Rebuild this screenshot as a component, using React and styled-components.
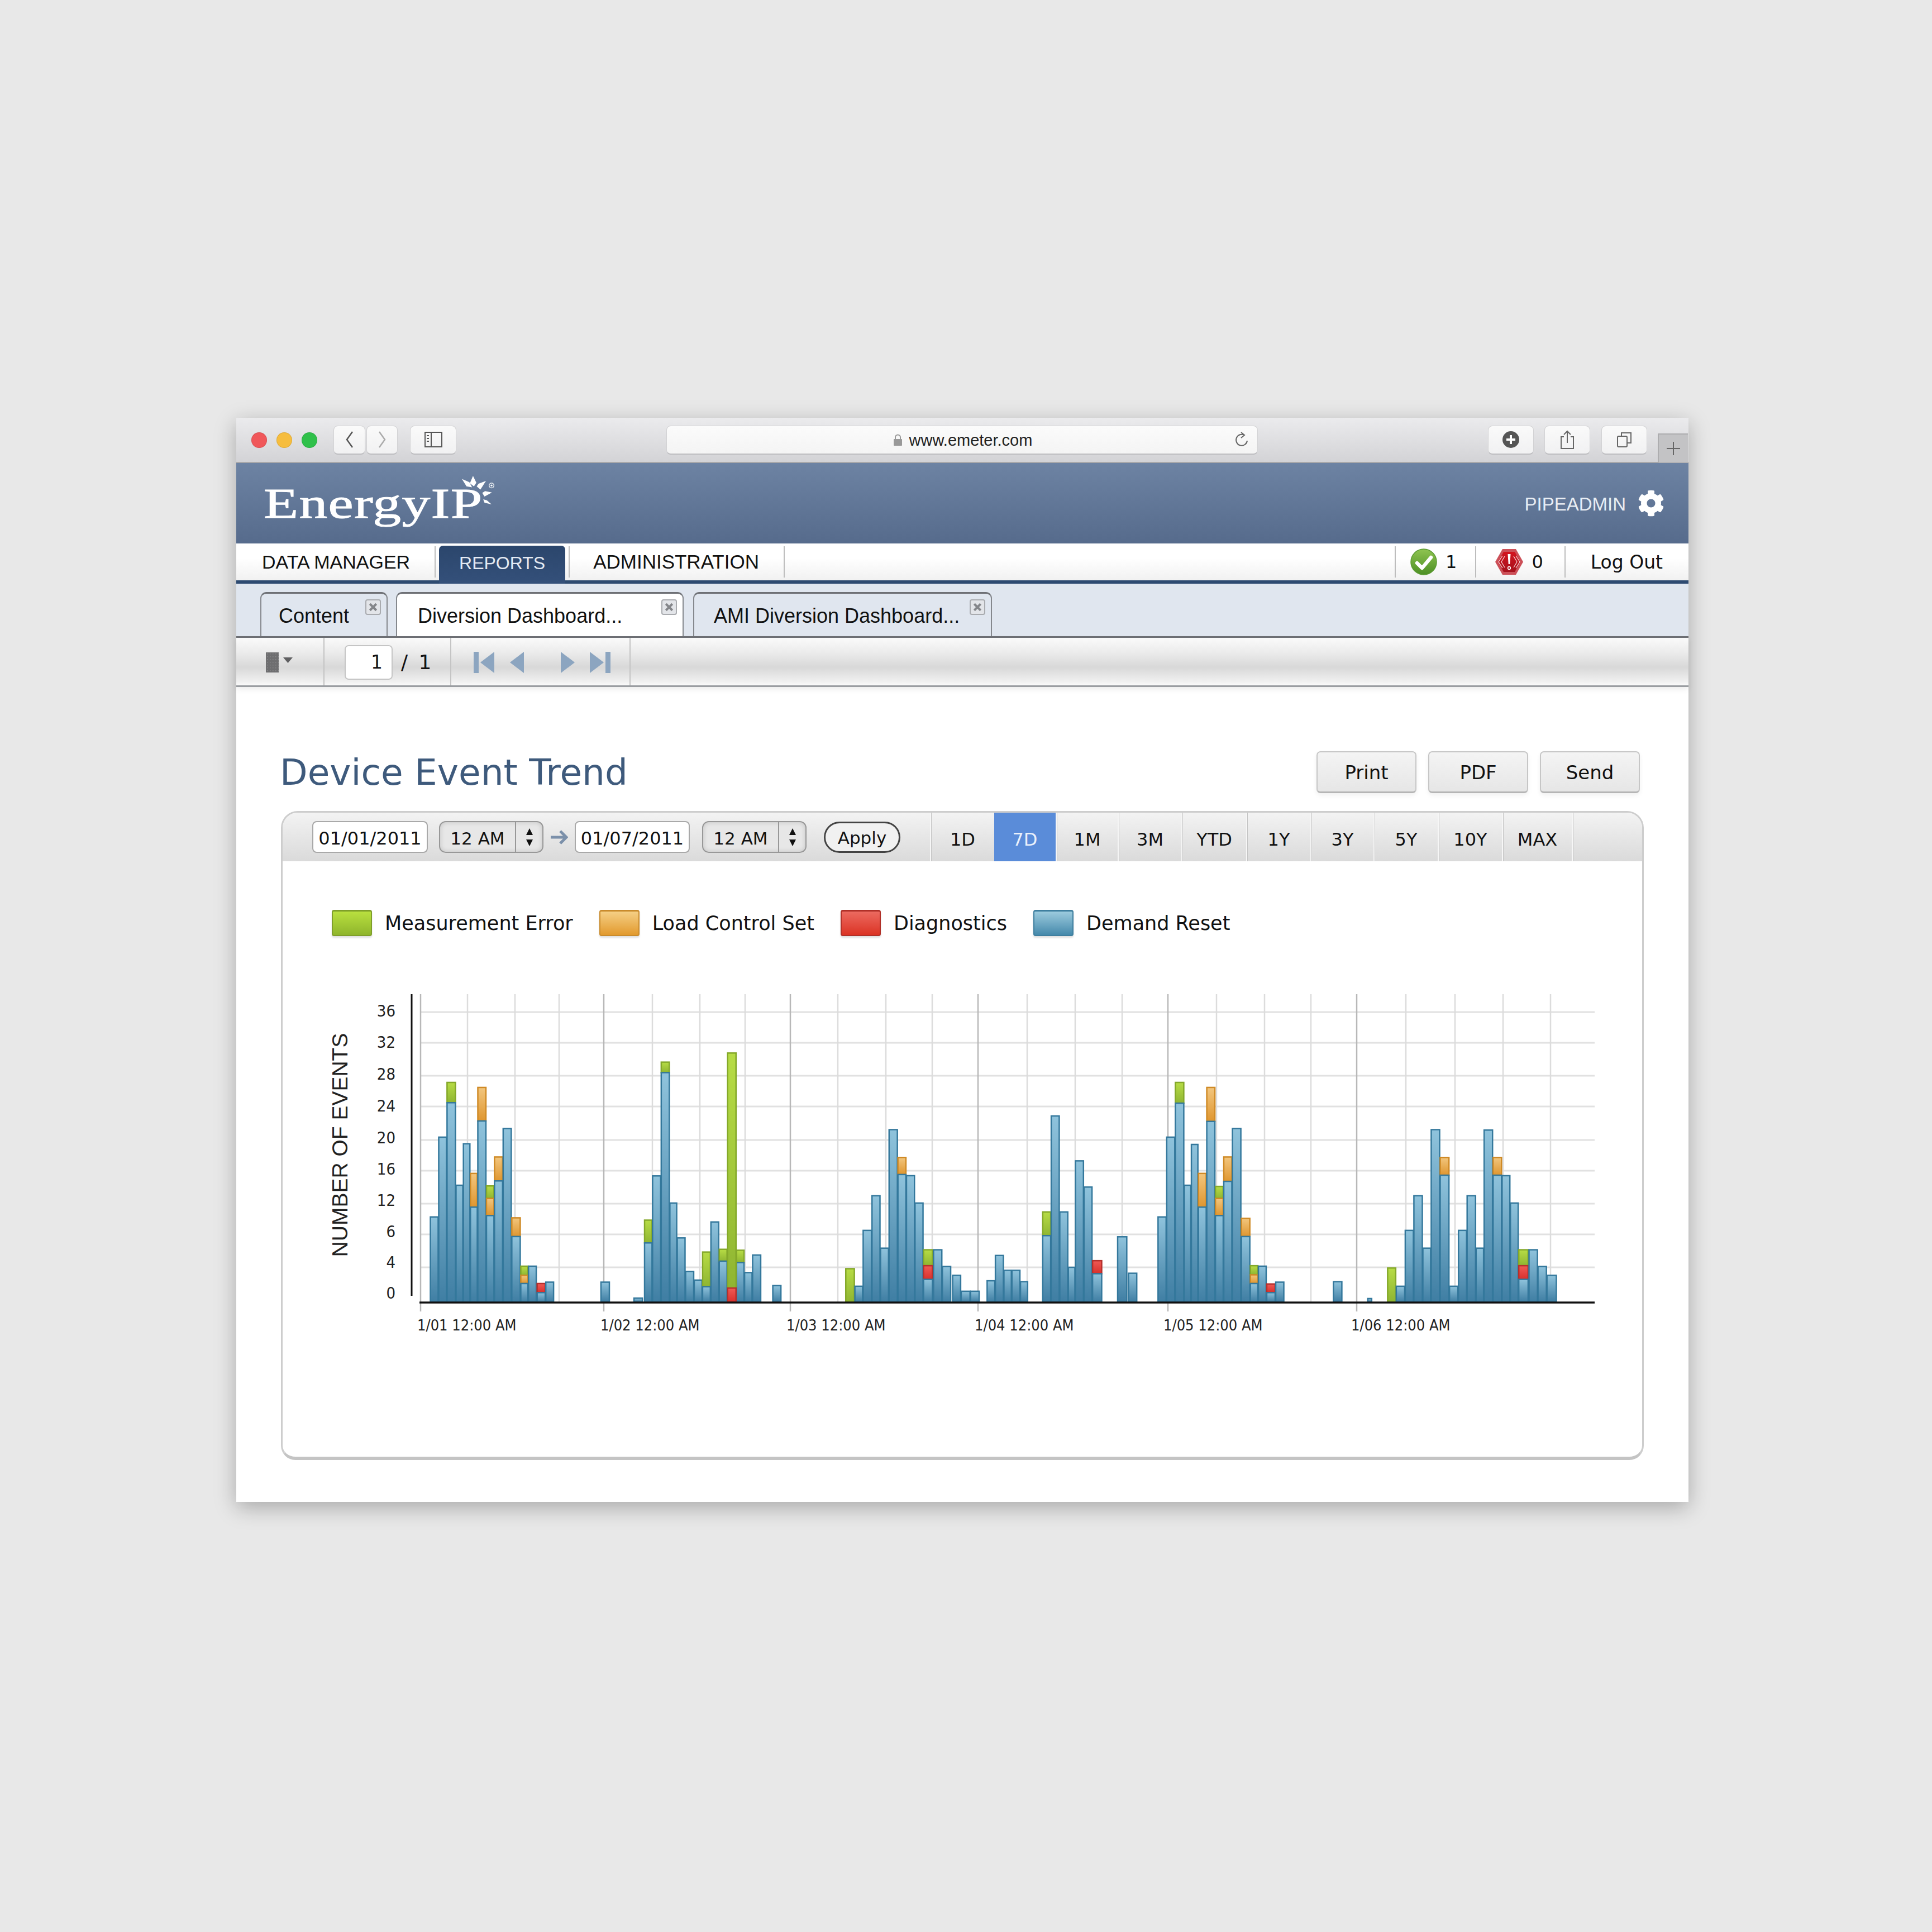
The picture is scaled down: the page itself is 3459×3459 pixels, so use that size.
import React from 'react';
import styled, { createGlobalStyle } from 'styled-components';
import { FaCog } from 'react-icons/fa';

const Global = createGlobalStyle`
  html, body { margin: 0; padding: 0; background: #e8e8e8; }
  * { box-sizing: border-box; }
`;

const SANS = '"Liberation Sans", Arial, sans-serif';
const DEJAVU = '"DejaVu Sans", Verdana, sans-serif';

const Page = styled.div`
  width: 3459px;
  height: 3459px;
  padding: 748px 0 0 423px;
  background: #e8e8e8;
`;
const Win = styled.div`
  width: 2600px;
  height: 1941px;
  background: #fff;
  box-shadow: 0 10px 36px rgba(0, 0, 0, 0.28);
  font-family: ${SANS};
  color: #111;
`;

/* safari chrome */
const TitleBar = styled.div`
  height: 81px;
  display: flex;
  align-items: center;
  padding-left: 27px;
  background: linear-gradient(#ebebed, #d3d3d6);
  border-bottom: 2px solid #a8a8aa;
`;
const Light = styled.span`
  width: 28px;
  height: 28px;
  border-radius: 50%;
  margin-right: 17px;
  background: ${p => p.$c};
  box-shadow: inset 0 0 0 1px rgba(0, 0, 0, 0.1);
`;
const ChromeBtn = styled.div`
  width: ${p => p.$w}px;
  height: 52px;
  margin-left: ${p => p.$ml || 0}px;
  display: flex;
  align-items: center;
  justify-content: center;
  background: linear-gradient(#fafafa, #f1f1f2);
  border: 1px solid #d2d2d4;
  border-bottom: 2px solid #bdbdc0;
  border-radius: 8px;
`;
const Address = styled.div`
  width: 1059px;
  height: 52px;
  margin-left: 376px;
  display: grid;
  grid-template-columns: 1fr auto 1fr;
  align-items: center;
  padding: 0 16px 0 18px;
  background: linear-gradient(#fbfbfb, #f4f4f4);
  border: 1px solid #d2d2d4;
  border-bottom: 2px solid #bdbdc0;
  border-radius: 8px;
`;
const Url = styled.div`
  grid-column: 2;
  display: flex;
  align-items: center;
  gap: 12px;
  padding-top: 2px;
  font-size: 29px;
  color: #222;
`;
const Reload = styled.svg`
  grid-column: 3;
  justify-self: end;
`;
const PlusTab = styled.div`
  width: 54px;
  height: 52px;
  margin-left: 19px;
  align-self: flex-end;
  margin-bottom: -1px;
  display: flex;
  align-items: center;
  justify-content: center;
  background: #c3c3c5;
  border: 2px solid #adadaf;
  border-right: none;
  border-bottom: none;
`;

/* app header */
const Header = styled.div`
  height: 144px;
  display: flex;
  align-items: center;
  justify-content: space-between;
  padding: 0 43px 0 49px;
  background: linear-gradient(#6d83a3, #566b8c);
`;
const Logo = styled.div`
  position: relative;
  height: 96px;
  width: 420px;
`;
const LogoText = styled.div`
  font-family: "Liberation Serif", "Times New Roman", serif;
  font-size: 77px;
  line-height: 96px;
  letter-spacing: 1px;
  color: #fff;
  transform: scaleX(1.32);
  transform-origin: left center;
  -webkit-text-stroke: 1px #fff;
`;
const Rays = styled.svg`
  position: absolute;
  left: 348px;
  top: -7px;
`;
const User = styled.div`
  display: flex;
  align-items: center;
  gap: 21px;
  font-size: 33px;
  color: #e8edf3;
`;
const UserName = styled.span`
  padding-top: 3px;
`;

/* primary nav */
const Nav = styled.div`
  height: 72px;
  display: flex;
  align-items: center;
  background: linear-gradient(#fff 40%, #f1f1f1);
  border-bottom: 6px solid #2d4a71;
`;
const NavItem = styled.div`
  height: 56px;
  display: flex;
  align-items: center;
  padding: 0 ${p => p.$pr ?? 44}px 0 ${p => p.$pl ?? 44}px;
  border-right: ${p => (p.$bare ? 'none' : '2px solid #bdbdbd')};
  border-left: ${p => (p.$first ? '2px solid #bdbdbd' : 'none')};
  gap: 15px;
  font-family: ${p => (p.$dejavu ? DEJAVU : SANS)};
  font-size: ${p => p.$size || 34}px;
`;
const NavActive = styled.div`
  width: 226px;
  height: 68px;
  margin: 0 6px;
  align-self: flex-end;
  margin-bottom: -6px;
  display: flex;
  align-items: center;
  justify-content: center;
  padding-bottom: 6px;
  font-size: 32px;
  color: #e4eaf3;
  border-radius: 7px 7px 0 0;
  background: linear-gradient(#2b466c, #34507a);
`;
const NavRight = styled.div`
  margin-left: auto;
  display: flex;
  align-items: center;
`;
const Count = styled.span`
  font-family: ${DEJAVU};
  font-size: 32px;
`;

/* document tabs */
const TabsRow = styled.div`
  height: 97px;
  display: flex;
  align-items: flex-end;
  padding-left: 43px;
  background: #e0e6ef;
  border-bottom: 3px solid #6e7075;
`;
const Tab = styled.div`
  position: relative;
  width: ${p => p.$w}px;
  height: 79px;
  margin-right: ${p => p.$mr || 0}px;
  padding: 4px 0 0 ${p => p.$pl}px;
  display: flex;
  align-items: center;
  font-size: 36px;
  background: ${p => (p.$active ? '#fff' : 'transparent')};
  border: 2px solid #85888d;
  border-top: 3px solid #6e7075;
  border-bottom: none;
  border-radius: 11px 11px 0 0;
`;
const CloseBox = styled.div`
  position: absolute;
  top: 10px;
  right: 10px;
  width: 28px;
  height: 28px;
  display: flex;
  align-items: center;
  justify-content: center;
  background: #e3e5e9;
  border: 2px solid #a9abaf;
  border-radius: 4px;
`;

/* report toolbar */
const ReportBar = styled.div`
  height: 88px;
  display: flex;
  background: linear-gradient(#fafafa, #ececec 30%, #d8d8d8 62%, #f0f0f0 92%, #fafafa);
  border-bottom: 3px solid #9a9da1;
  box-shadow: 0 4px 10px rgba(0, 0, 0, 0.08);
`;
const BarCell = styled.div`
  width: ${p => p.$w}px;
  display: flex;
  align-items: center;
  padding: 2px 0 0 ${p => p.$pl}px;
  border-right: 2px solid #c4c4c4;
`;
const PageInput = styled.div`
  width: 86px;
  height: 62px;
  padding-right: 16px;
  display: flex;
  align-items: center;
  justify-content: flex-end;
  background: #fff;
  border: 2px solid #c5c5c5;
  border-radius: 7px;
  font-family: ${DEJAVU};
  font-size: 33px;
`;
const PageTotal = styled.span`
  margin-left: 15px;
  font-family: ${DEJAVU};
  font-size: 36px;
  word-spacing: 8px;
`;

/* report */
const TitleRow = styled.div`
  display: flex;
  justify-content: space-between;
  align-items: center;
  margin: 115px 87px 0 78px;
`;
const Title = styled.h1`
  margin: 0;
  font-family: ${DEJAVU};
  font-size: 64.5px;
  font-weight: 400;
  color: #3e5a7c;
`;
const Actions = styled.div`
  display: flex;
  gap: 21px;
`;
const ActionBtn = styled.div`
  width: 179px;
  height: 75px;
  padding-top: 2px;
  display: flex;
  align-items: center;
  justify-content: center;
  font-family: ${DEJAVU};
  font-size: 34px;
  background: linear-gradient(#f4f4f4, #e6e6e6);
  border: 2px solid #c6c6c6;
  border-bottom: 3px solid #b5b5b5;
  border-radius: 7px;
  box-shadow: 0 4px 8px rgba(0, 0, 0, 0.06);
`;
const Panel = styled.div`
  width: 2440px;
  height: 1162px;
  margin: 32px 0 0 80px;
  border: 3px solid #cdcdcd;
  border-bottom: 6px solid #c4c4c4;
  border-radius: 30px 30px 26px 26px;
  font-family: ${DEJAVU};
  overflow: hidden;
`;
const Strip = styled.div`
  height: 87px;
  display: flex;
  background: linear-gradient(#f3f3f3, #dadada);
`;
const Filters = styled.div`
  width: 1159px;
  display: flex;
  align-items: center;
  padding-left: 53px;
  font-size: 32px;
`;
const DateBox = styled.div`
  width: ${p => p.$w}px;
  height: 57px;
  margin-right: ${p => p.$mr}px;
  padding-top: 5px;
  display: flex;
  align-items: center;
  justify-content: center;
  background: #fff;
  border: 2px solid #a9a9a9;
  border-radius: 8px;
`;
const TimeSelect = styled.div`
  width: 187px;
  height: 57px;
  margin-right: ${p => p.$mr}px;
  display: grid;
  grid-template-columns: 1fr 49px;
  align-items: stretch;
  background: #e7e7e7;
  border: 2px solid #989898;
  border-radius: 12px;
  box-shadow: inset 0 0 8px rgba(0, 0, 0, 0.16);
`;
const TimeText = styled.span`
  padding-top: 5px;
  display: flex;
  align-items: center;
  justify-content: center;
  font-size: 31px;
`;
const Stepper = styled.span`
  display: flex;
  align-items: center;
  justify-content: center;
  border-left: 2px solid #989898;
`;
const Apply = styled.div`
  width: 137px;
  height: 56px;
  padding-top: 2px;
  display: flex;
  align-items: center;
  justify-content: center;
  background: #f1f1f1;
  border: 3px solid #444;
  border-radius: 28px;
  font-size: 31px;
`;
const Range = styled.div`
  width: ${p => p.$w}px;
  display: flex;
  align-items: center;
  justify-content: center;
  padding-top: 9px;
  font-size: 32px;
  color: ${p => (p.$active ? '#eaf1fb' : '#111')};
  background: ${p => (p.$active ? '#5a8cd9' : 'transparent')};
  border-left: ${p => (p.$active ? 'none' : '2px solid #f6f6f6')};
  box-shadow: ${p => (p.$active ? 'none' : 'inset 1px 0 0 #c4c4c4')};
`;
const RangeRest = styled.div`
  flex: 1;
  border-left: 2px solid #f6f6f6;
  box-shadow: inset 1px 0 0 #c4c4c4;
`;
const Legend = styled.div`
  display: flex;
  gap: 47px;
  margin: 87px 0 0 88px;
`;
const LegendItem = styled.div`
  display: flex;
  align-items: center;
  gap: 23px;
  font-size: 35px;
`;
const Swatch = styled.span`
  width: 72px;
  height: 47px;
  border-radius: 4px;
  background: linear-gradient(${p => p.$from}, ${p => p.$to});
  border: 2px solid ${p => p.$line};
  border-top-width: 3px;
  box-shadow: 0 3px 3px rgba(0, 0, 0, 0.12);
`;
const ChartSvg = styled.svg`
  display: block;
  margin: 94px 0 0 64px;
`;
const AxisText = styled.text`
  font-family: "DejaVu Sans Condensed", "DejaVu Sans", sans-serif;
  font-size: ${p => p.$size}px;
  fill: #222;
`;
const AxisTitle = styled.text`
  font-family: ${SANS};
  font-size: 39px;
  fill: #222;
`;

const FILLS = { b: 'url(#gb)', g: 'url(#gg)', o: 'url(#go)', r: 'url(#gr)' };
const LINES = { b: '#34789c', g: '#84a82a', o: '#cf8a26', r: '#b5302c' };
const BASE = 2331;

// rows are "x0 x1 seg seg..", a seg is colour + top read off the picture
const group = (ox, sx, rows) =>
  rows.map(row => {
    const [a, b, ...segs] = row.split(' ');
    return { x0: ox + a / sx, x1: ox + b / sx, segs: segs.map(s => ({ c: s[0], top: 1760 + s.slice(1) / 2.45 })) };
  });

const BARS = [
  ...group(560, 1.742, [
    '365 391 b1026', '391 417 b676', '417 445 g436 b525', '445 468 b887', '468 490 b705',
    '490 513 o835 b983', '513 540 o458 b605', '540 565 g890 o945 b1020', '565 592 o763 b868',
    '592 619 b638', '619 647 o1030 b1112', '647 671 g1242 o1282 b1318', '671 697 b1242',
    '698 725 r1318 b1358', '725 751 b1312', '897 925 b1312', '1000 1028 b1382',
    '1033 1058 g1040 b1140', '1058 1085 b846', '1085 1112 g347 b393', '1112 1135 b965',
    '1135 1161 b1118', '1161 1188 b1265', '1188 1214 b1303', '1214 1240 g1180 b1332',
    '1240 1266 b1048', '1266 1292 g1168 b1220', '1320 1345 g1172 b1226', '1292 1320 g307 r1338',
    '1345 1370 b1270', '1370 1397 b1193', '1433 1460 b1327',
  ]),
  ...group(1400, 1.96, [
    '222 254 g1253', '254 283 b1330', '283 314 b1085', '314 344 b933', '344 374 b1163',
    '374 405 b643', '405 435 o765 b840', '435 465 b845', '465 495 b965',
    '495 528 g1170 r1240 b1300', '530 561 b1170', '561 592 b1243', '597 627 b1282',
    '627 660 b1352', '660 692 b1352', '718 747 b1306', '747 777 b1195', '777 805 b1260',
    '805 835 b1260', '835 862 b1310', '913 943 g1004 b1108', '943 973 b583', '973 1003 b1004',
    '1003 1028 b1247', '1028 1058 b780', '1058 1088 b895', '1088 1122 r1218 b1275',
    '1176 1210 b1113', '1214 1245 b1273',
  ]),
  ...group(2000, 1.742, [
    '126 153 b1026', '153 180 b676', '180 208 g436 b527', '208 230 b887', '230 252 b708',
    '252 278 o835 b983', '278 305 o458 b607', '305 331 g892 o945 b1020', '331 358 o763 b870',
    '358 386 b638', '386 414 o1032 b1112', '414 439 g1240 o1280 b1318', '439 465 b1242',
    '465 493 r1320 b1358', '493 520 b1312', '673 701 b1310', '780 794 b1384', '842 869 g1250',
    '869 897 b1330', '897 924 b1085', '924 952 b933', '952 978 b1163', '978 1006 b643',
    '1006 1035 o765 b843', '1035 1063 b1330', '1063 1090 b1085', '1090 1118 b933',
    '1118 1143 b1163', '1143 1171 b645', '1171 1199 o765 b843', '1199 1225 b845',
    '1225 1251 b965', '1251 1282 g1170 r1240 b1300', '1283 1311 b1170', '1311 1339 b1243',
    '1339 1370 b1282',
  ]),
];

const H_GRID = [1812, 1867, 1926, 1981, 2041, 2096, 2155, 2210, 2269];
const V_LIGHT = [837, 922, 1001, 1168, 1253, 1334, 1500, 1586, 1669, 1839, 1925, 2009, 2178, 2264, 2347, 2517, 2605, 2691, 2776];
const V_DARK = [753, 1081, 1415, 1751, 2091, 2429];
const Y_TICKS = [['36', 1810], ['32', 1866], ['28', 1923], ['24', 1980], ['20', 2037], ['16', 2093], ['12', 2149], ['6', 2205], ['4', 2260], ['0', 2315]];
const X_TICKS = [['1/01', 747], ['1/02', 1075], ['1/03', 1408], ['1/04', 1745], ['1/05', 2083], ['1/06', 2419]];

const grad = (id, top, bottom) => (
  <linearGradient id={id} x1="0" y1="0" x2="0" y2="1">
    <stop offset="0" stopColor={top} />
    <stop offset="1" stopColor={bottom} />
  </linearGradient>
);

const Chart = () => (
  <ChartSvg width="2300" height="640" viewBox="570 1770 2300 640">
    <defs>
      {grad('gb', '#8fc3dc', '#3f7ea3')}
      {grad('gg', '#b7dc45', '#8fb532')}
      {grad('go', '#f2c67e', '#df962f')}
      {grad('gr', '#ef5a55', '#d8302c')}
    </defs>
    {H_GRID.map(y => <line key={y} x1="753" x2="2855" y1={y} y2={y} stroke="#e1e1e1" strokeWidth="3" />)}
    {V_LIGHT.map(x => <line key={x} x1={x} x2={x} y1="1780" y2="2332" stroke="#dcdcdc" strokeWidth="2.5" />)}
    {V_DARK.map(x => <line key={x} x1={x} x2={x} y1="1780" y2="2348" stroke="#b8b8b8" strokeWidth="2.5" />)}
    {BARS.map((bar, i) =>
      bar.segs.map((seg, j) => {
        const next = bar.segs[j + 1];
        const bottom = next ? next.top : BASE;
        return (
          <rect
            key={`${i}-${j}`}
            x={bar.x0 + 1}
            y={seg.top}
            width={bar.x1 - bar.x0 - 1}
            height={bottom - seg.top}
            fill={FILLS[seg.c]}
            stroke={LINES[seg.c]}
            strokeWidth="2.5"
          />
        );
      })
    )}
    <line x1="737" x2="737" y1="1780" y2="2320" stroke="#111" strokeWidth="3" />
    <line x1="751" x2="2855" y1="2332" y2="2332" stroke="#111" strokeWidth="3.5" />
    {Y_TICKS.map(([label, y]) => (
      <AxisText key={label} $size={29} x="708" y={y + 10} textAnchor="end">{label}</AxisText>
    ))}
    {X_TICKS.map(([label, x]) => (
      <AxisText key={label} $size={27} x={x} y="2382">{label} 12:00 AM</AxisText>
    ))}
    <AxisTitle transform="translate(622 2050) rotate(-90)" textAnchor="middle">NUMBER OF EVENTS</AxisTitle>
  </ChartSvg>
);

const Chevron = ({ d, color }) => (
  <svg width="18" height="32" viewBox="0 0 18 32" fill="none" stroke={color} strokeWidth="2.5">
    <path d={d} />
  </svg>
);

const SunRays = () => (
  <Rays width="67" height="63" viewBox="1080 20 200 190">
    <g fill="#fff">
      <polygon points="1100,55 1140,72 1155,100 1125,95" />
      <polygon points="1160,38 1178,75 1165,95 1143,78" />
      <polygon points="1230,65 1200,112 1180,95 1190,80" />
      <polygon points="1262,128 1222,150 1210,130 1225,120" />
      <polygon points="1260,192 1222,183 1215,165 1235,170" />
    </g>
    <circle cx="1260" cy="90" r="13" fill="none" stroke="#fff" strokeWidth="4" />
    <circle cx="1260" cy="90" r="5" fill="#fff" />
  </Rays>
);

const CheckIcon = () => (
  <svg width="48" height="48" viewBox="0 0 48 48">
    <defs>
      <linearGradient id="okg" x1="0" y1="0" x2="0" y2="1">
        <stop offset="0" stopColor="#8fc451" />
        <stop offset="1" stopColor="#4c8f24" />
      </linearGradient>
    </defs>
    <circle cx="24" cy="24" r="23" fill="url(#okg)" stroke="#5a9a32" strokeWidth="1.5" />
    <path d="M12 26 L21 35 L37 16" fill="none" stroke="#fff" strokeWidth="6.5" strokeLinecap="round" strokeLinejoin="round" />
  </svg>
);

const AlertIcon = () => (
  <svg width="50" height="46" viewBox="0 0 50 46">
    <defs>
      <linearGradient id="alertg" x1="0" y1="0" x2="0" y2="1">
        <stop offset="0" stopColor="#d3131f" />
        <stop offset="1" stopColor="#a5121d" />
      </linearGradient>
    </defs>
    <polygon points="13,0 37,0 50,23 37,46 13,46 0,23" fill="#cc5058" />
    <polygon points="15,5 35,5 45,23 35,41 15,41 5,23" fill="url(#alertg)" />
    <path d="M13 12 L6 23 L13 34 M17 13 L11 23 L17 33 M37 12 L44 23 L37 34 M33 13 L39 23 L33 33" fill="none" stroke="#f7d5d7" strokeWidth="1.3" />
    <polygon points="22.5,9 27.5,9 26.3,27 23.7,27" fill="#fff" />
    <circle cx="25" cy="34" r="2.4" fill="none" stroke="#fff" strokeWidth="1.5" />
  </svg>
);

const CloseIcon = () => (
  <svg width="16" height="16" viewBox="0 0 14 14" stroke="#84868a" strokeWidth="3.5">
    <path d="M2 2 L12 12 M12 2 L2 12" />
  </svg>
);

const StepIcon = () => (
  <svg width="14" height="34" viewBox="0 0 14 34" fill="#111">
    <polygon points="7,1 13,13 1,13" />
    <polygon points="7,33 13,21 1,21" />
  </svg>
);

const RANGES = [['1D', 115], ['7D', 110, true], ['1M', 111], ['3M', 114], ['YTD', 116], ['1Y', 115], ['3Y', 113], ['5Y', 115], ['10Y', 115], ['MAX', 125]];
const LEGEND = [
  ['Measurement Error', '#b9e03f', '#8fb52c', '#7f9f2a'],
  ['Load Control Set', '#f5cf85', '#e29a2e', '#c98b2c'],
  ['Diagnostics', '#ec6a60', '#db3324', '#b03028'],
  ['Demand Reset', '#9ccbde', '#4589ab', '#3f7f9f'],
];

export default function App() {
  return (
    <Page>
      <Global />
      <Win>
        <TitleBar>
          <Light $c="#f0575a" />
          <Light $c="#f6bd3e" />
          <Light $c="#2fc04a" />
          <ChromeBtn $w={57} $ml={12}><Chevron d="M14 2 L4 16 L14 30" color="#555" /></ChromeBtn>
          <ChromeBtn $w={56} $ml={2}><Chevron d="M4 2 L14 16 L4 30" color="#aaa" /></ChromeBtn>
          <ChromeBtn $w={83} $ml={22}>
            <svg width="32" height="28" viewBox="0 0 32 28" fill="none" stroke="#555" strokeWidth="2">
              <rect x="1" y="1" width="30" height="26" />
              <path d="M12 1 V27" />
              <path d="M4 7 H8 M4 12 H8 M4 17 H8" />
            </svg>
          </ChromeBtn>
          <Address>
            <Url>
              <svg width="17" height="22" viewBox="0 0 17 22">
                <path d="M4 10 V6 a4.5 4.5 0 0 1 9 0 V10" fill="none" stroke="#999" strokeWidth="2" />
                <rect x="1" y="9" width="15" height="12" rx="1" fill="#999" />
              </svg>
              www.emeter.com
            </Url>
            <Reload width="24" height="28" viewBox="0 0 24 28" fill="none" stroke="#666" strokeWidth="2">
              <path d="M17 6 A10 10 0 1 0 22 16" />
              <path d="M11 1 L17 6 L11 11" />
            </Reload>
          </Address>
          <ChromeBtn $w={82} $ml={412}>
            <svg width="30" height="30" viewBox="0 0 30 30">
              <circle cx="15" cy="15" r="15" fill="#555" />
              <path d="M15 7 V23 M7 15 H23" stroke="#fff" strokeWidth="4" />
            </svg>
          </ChromeBtn>
          <ChromeBtn $w={82} $ml={19}>
            <svg width="26" height="34" viewBox="0 0 26 34" fill="none" stroke="#666" strokeWidth="2">
              <path d="M7 12 H2 V33 H24 V12 H19" />
              <path d="M13 23 V2 M7 8 L13 2 L19 8" />
            </svg>
          </ChromeBtn>
          <ChromeBtn $w={82} $ml={20}>
            <svg width="28" height="28" viewBox="0 0 28 28" fill="none" stroke="#666" strokeWidth="2">
              <rect x="2" y="8" width="17" height="19" rx="2" />
              <path d="M9 8 V2 H26 V20 H19" />
            </svg>
          </ChromeBtn>
          <PlusTab>
            <svg width="24" height="24" viewBox="0 0 24 24" stroke="#666" strokeWidth="2"><path d="M12 0 V24 M0 12 H24" /></svg>
          </PlusTab>
        </TitleBar>

        <Header>
          <Logo>
            <LogoText>EnergyIP</LogoText>
            <SunRays />
          </Logo>
          <User><UserName>PIPEADMIN</UserName> <FaCog size={48} color="#fff" /></User>
        </Header>

        <Nav>
          <NavItem $pl={46} $pr={44}>DATA MANAGER</NavItem>
          <NavActive>REPORTS</NavActive>
          <NavItem $first $pl={42} $size={35}>ADMINISTRATION</NavItem>
          <NavRight>
            <NavItem $first $pl={26} $pr={33}><CheckIcon /><Count>1</Count></NavItem>
            <NavItem $pl={34} $pr={38}><AlertIcon /><Count>0</Count></NavItem>
            <NavItem $bare $dejavu $size={33} $pl={45} $pr={46}>Log Out</NavItem>
          </NavRight>
        </Nav>

        <TabsRow>
          <Tab $w={228} $mr={15} $pl={31}>Content<CloseBox><CloseIcon /></CloseBox></Tab>
          <Tab $w={515} $mr={17} $pl={37} $active>Diversion Dashboard...<CloseBox><CloseIcon /></CloseBox></Tab>
          <Tab $w={535} $pl={35}>AMI Diversion Dashboard...<CloseBox><CloseIcon /></CloseBox></Tab>
        </TabsRow>

        <ReportBar>
          <BarCell $w={158} $pl={53}>
            <svg width="48" height="36" viewBox="0 0 48 36">
              <defs>
                <pattern id="dots" width="5" height="5" patternUnits="userSpaceOnUse">
                  <rect width="5" height="5" fill="#6e6e70" />
                  <rect x="2" y="2" width="1.5" height="1.5" fill="#8a8a8c" />
                </pattern>
              </defs>
              <rect width="23" height="36" fill="url(#dots)" />
              <polygon points="31,9 48,9 39.5,19" fill="#5f5f61" />
            </svg>
          </BarCell>
          <BarCell $w={227} $pl={36}>
            <PageInput>1</PageInput>
            <PageTotal>/ 1</PageTotal>
          </BarCell>
          <BarCell $w={321} $pl={40}>
            <svg width="246" height="40" viewBox="0 0 246 40" fill="#8ca5c0">
              <rect x="0" y="1" width="9" height="38" />
              <polygon points="37,1 37,39 12,20" />
              <polygon points="90,1 90,39 65,20" />
              <polygon points="156,1 156,39 181,20" />
              <polygon points="208,1 208,39 233,20" />
              <rect x="236" y="1" width="9" height="38" />
            </svg>
          </BarCell>
        </ReportBar>

        <TitleRow>
          <Title>Device Event Trend</Title>
          <Actions>
            <ActionBtn>Print</ActionBtn>
            <ActionBtn>PDF</ActionBtn>
            <ActionBtn>Send</ActionBtn>
          </Actions>
        </TitleRow>

        <Panel>
          <Strip>
            <Filters>
              <DateBox $w={207} $mr={20}>01/01/2011</DateBox>
              <TimeSelect $mr={13}>
                <TimeText>12 AM</TimeText>
                <Stepper><StepIcon /></Stepper>
              </TimeSelect>
              <svg width="31" height="26" viewBox="0 0 31 26" fill="none" stroke="#7b90aa" strokeWidth="5" style={{ marginRight: 12 }}>
                <path d="M0 13 H27 M17 2 L28 13 L17 24" />
              </svg>
              <DateBox $w={206} $mr={22}>01/07/2011</DateBox>
              <TimeSelect $mr={31}>
                <TimeText>12 AM</TimeText>
                <Stepper><StepIcon /></Stepper>
              </TimeSelect>
              <Apply>Apply</Apply>
            </Filters>
            {RANGES.map(([label, w, active]) => (
              <Range key={label} $w={w} $active={active}>{label}</Range>
            ))}
            <RangeRest />
          </Strip>
          <Legend>
            {LEGEND.map(([label, from, to, line]) => (
              <LegendItem key={label}>
                <Swatch $from={from} $to={to} $line={line} />
                {label}
              </LegendItem>
            ))}
          </Legend>
          <Chart />
        </Panel>
      </Win>
    </Page>
  );
}
